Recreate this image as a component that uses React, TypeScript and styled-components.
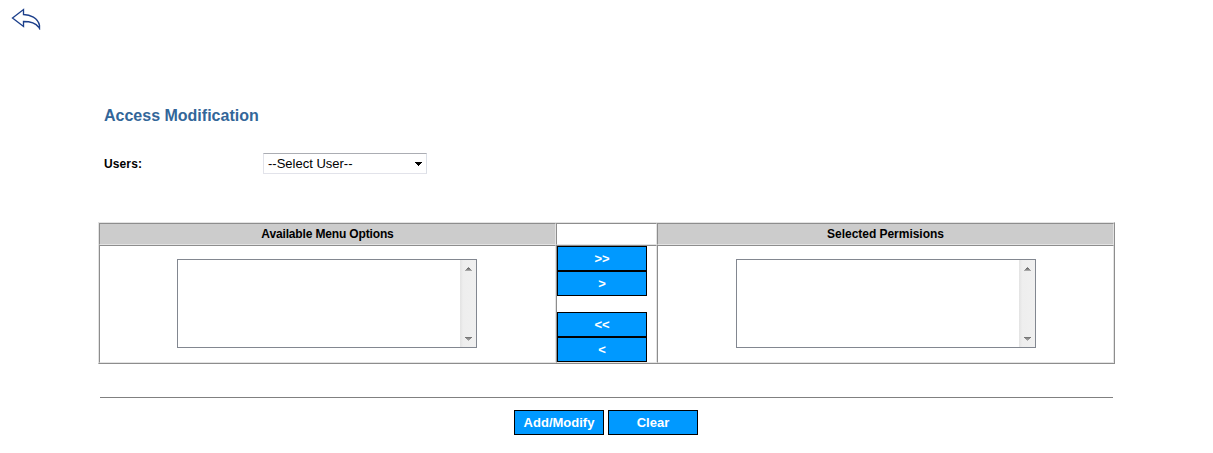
import React from "react";
import styled, { createGlobalStyle } from "styled-components";

const GlobalStyle = createGlobalStyle`
  * { box-sizing: border-box; }
  body {
    margin: 0;
    background: #fff;
    color: #000;
    font-family: "Liberation Sans", Arial, sans-serif;
    font-size: 12px;
  }
`;

const Page = styled.div`
  width: 1213px;
  height: 453px;
  display: flex;
  flex-direction: column;
  overflow: hidden;
`;

const TopBar = styled.header`
  height: 105px;
  padding: 8px 0 0 11px;
`;

const BackLink = styled.a`
  display: block;
  width: 30px;
  height: 22px;
  svg { display: block; }
`;

const Title = styled.h1`
  margin: 0 0 0 104px;
  height: 21px;
  line-height: 21px;
  font-size: 16px;
  font-weight: bold;
  color: #336699;
  span { display: inline-block; white-space: nowrap; }
`;

const UserRow = styled.div`
  display: flex;
  align-items: center;
  margin: 27px 0 0 104px;
  height: 21px;
`;

const Label = styled.label`
  width: 159px;
  padding-top: 1px;
  font-weight: bold;
  letter-spacing: 0.12px;
  line-height: 21px;
`;

const Select = styled.div`
  width: 164px;
  height: 21px;
  display: flex;
  align-items: center;
  justify-content: space-between;
  padding: 0 4px;
  border: 1px solid #e2e3ea;
  border-top-color: #abadb3;
  border-right-color: #dbdfe6;
  border-left-color: #e2e3ea;
  font-size: 13px;
  line-height: 19px;
`;

const Table = styled.section`
  display: grid;
  grid-template-columns: 457px 101px 457px;
  grid-template-rows: 22px 118px;
  width: 1017px;
  height: 142px;
  margin: 48px 0 0 98px;
  border: 1px solid;
  border-color: #e3e3e3 #8d8d8d #8d8d8d #e3e3e3;
`;

const Cell = styled.div`
  border: 1px solid;
  border-color: #8d8d8d #e3e3e3 #e3e3e3 #8d8d8d;
`;

const HeadCell = styled(Cell)<{ $filled?: boolean; $tracking?: number }>`
  background: ${(p) => (p.$filled ? "#cccccc" : "#fff")};
  font-weight: bold;
  letter-spacing: ${(p) => p.$tracking ?? 0}px;
  line-height: 20px;
  text-align: center;
`;

const ListCell = styled(Cell)<{ $inset: number }>`
  padding: 13px 0 0 ${(p) => p.$inset}px;
`;

const ButtonCell = styled(Cell)`
  display: flex;
  flex-direction: column;
`;

const ListBox = styled.div`
  width: 300px;
  height: 89px;
  border: 1px solid #828790;
  display: flex;
  justify-content: flex-end;
`;

const ScrollTrack = styled.div`
  width: 16px;
  height: 87px;
  padding: 7px 0 6px 5px;
  display: flex;
  flex-direction: column;
  justify-content: space-between;
  background: linear-gradient(to right, #e3e3e3 0, #e9e9e9 2px, #eeeeee 3px, #f0f0f0 100%);
  svg { display: block; }
`;

const Button = styled.button<{ $gap?: number }>`
  display: block;
  width: 90px;
  height: 25px;
  margin: 0 0 ${(p) => p.$gap ?? 0}px;
  padding: 0;
  border: 1px solid #000;
  border-radius: 0;
  background: #0099ff;
  color: #fff;
  font: bold 13px/23px "Liberation Sans", Arial, sans-serif;
  text-align: center;
`;

const MoveButton = styled(Button)`
  font-size: 13px;
`;

const Rule = styled.hr`
  width: 1013px;
  height: 1px;
  margin: 33px 0 0 100px;
  border: 0;
  background: #808080;
`;

const Actions = styled.footer`
  display: flex;
  gap: 4px;
  margin: 12px 0 0 514px;
`;

function ListPanel() {
  return (
    <ListBox>
      <ScrollTrack>
        <svg width="7" height="4" viewBox="0 0 7 4" shapeRendering="crispEdges">
          <path d="M3 0h1v1H3z" fill="#8c8c8c" />
          <path d="M2 1h3v1H2z" fill="#6f6f6f" />
          <path d="M1 2h5v1H1z" fill="#888888" />
          <path d="M0 3h7v1H0z" fill="#a8a8a8" />
        </svg>
        <svg width="7" height="4" viewBox="0 0 7 4" shapeRendering="crispEdges">
          <path d="M0 0h7v1H0z" fill="#777777" />
          <path d="M1 1h5v1H1z" fill="#8c8c8c" />
          <path d="M2 2h3v1H2z" fill="#9c9c9c" />
          <path d="M3 3h1v1H3z" fill="#b4b4b4" />
        </svg>
      </ScrollTrack>
    </ListBox>
  );
}

export default function App() {
  return (
    <Page>
      <GlobalStyle />
      <TopBar>
        <BackLink aria-label="Back">
          <svg width="30" height="22" viewBox="0 0 30 22" fill="none" stroke="#1c3f8b" strokeWidth="1.35">
            <path d="M1.5 10L12.5 1.5V6.5C19 6.5 27 10 28.5 17.5V20.5L27.5 19C24 14 18 13.5 12.5 13.5V18.5Z" />
          </svg>
        </BackLink>
      </TopBar>
      <Title><span>Access Modification</span></Title>
      <UserRow>
        <Label>Users:</Label>
        <Select>
          --Select User--
          <svg width="7" height="4" viewBox="0 0 7 4" shapeRendering="crispEdges">
            <path d="M0 0h7v1H6v1H5v1H4v1H3V3H2V2H1V1H0z" fill="#000" />
          </svg>
        </Select>
      </UserRow>
      <Table>
        <HeadCell $filled $tracking={-0.15}>Available Menu Options</HeadCell>
        <HeadCell />
        <HeadCell $filled $tracking={-0.03}>Selected Permisions</HeadCell>
        <ListCell $inset={77}><ListPanel /></ListCell>
        <ButtonCell>
          <MoveButton>&gt;&gt;</MoveButton>
          <MoveButton $gap={16}>&gt;</MoveButton>
          <MoveButton>&lt;&lt;</MoveButton>
          <MoveButton>&lt;</MoveButton>
        </ButtonCell>
        <ListCell $inset={78}><ListPanel /></ListCell>
      </Table>
      <Rule />
      <Actions>
        <Button>Add/Modify</Button>
        <Button>Clear</Button>
      </Actions>
    </Page>
  );
}
